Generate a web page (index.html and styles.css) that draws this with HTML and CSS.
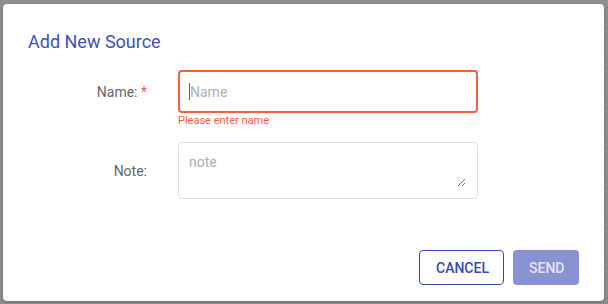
FILE: index.html
```html
<!DOCTYPE html>
<html>
<head>
<meta charset="utf-8">
<link rel="stylesheet" href="styles.css">
</head>
<body>
<div class="dialog">
  <h2 class="title">Add New Source</h2>
  <div class="form">
    <div class="row">
      <label class="label">Name: <span class="req">*</span></label>
      <div class="field">
        <div class="input error"><span class="caret"></span><span class="ph">Name</span></div>
        <div class="err-msg">Please enter name</div>
      </div>
    </div>
    <div class="row row-note">
      <label class="label">Note:</label>
      <div class="field">
        <div class="textarea"><span class="ph">note</span>
          <svg class="grip" width="9" height="9" viewBox="0 0 9 9"><path d="M8 1 L1 8 M8 5 L5 8" stroke="#777" stroke-width="1" fill="none"/></svg>
        </div>
      </div>
    </div>
  </div>
  <div class="actions">
    <button class="btn btn-outline">CANCEL</button>
    <button class="btn btn-fill">SEND</button>
  </div>
</div>
</body>
</html>
```
FILE: styles.css
```css
html, body { margin: 0; height: 100%; }
body {
  background-color: #8e8e8e;
  background-image: radial-gradient(circle, #7a7a7a 1px, transparent 1.2px);
  background-size: 10px 10px;
  background-position: 3px 3px;
  padding: 4px 4px 3px 3px;
  box-sizing: border-box;
  font-family: Roboto, "Liberation Sans", sans-serif;
}
.dialog {
  background: #fff;
  border-radius: 4px;
  height: 297px;
  box-sizing: border-box;
  padding: 26px 25px 16px 25px;
  display: flex;
  flex-direction: column;
  box-shadow: 0 1px 3px rgba(0,0,0,0.3);
}
.title {
  margin: 0;
  font-size: 18px;
  font-weight: 400;
  line-height: 24px;
  color: #3f51b5;
}
.form { margin-top: 16px; display: flex; flex-direction: column; }
.row { display: flex; align-items: flex-start; }
.label {
  width: 119px;
  text-align: right;
  font-size: 14px;
  color: #666;
  line-height: 20px;
  padding-top: 12px;
  flex-shrink: 0;
}
.req { color: #f4593b; }
.field { margin-left: 31px; width: 300px; }
.input {
  height: 43px;
  box-sizing: border-box;
  border: 2px solid #f4603e;
  border-radius: 4px;
  display: flex;
  align-items: center;
  padding-left: 9px;
  font-size: 14px;
}
.caret { width: 1px; height: 17px; background: #c0392b; }
.ph { color: #b0b0b0; font-size: 14px; }
.err-msg { color: #f4603e; font-size: 11px; line-height: 13px; margin-top: 1px; }
.row-note { margin-top: 15px; }
.row-note .label { padding-top: 19px; }
.textarea {
  height: 57px;
  box-sizing: border-box;
  border: 1px solid #e0e0e0;
  border-radius: 4px;
  padding: 10px 10px;
  position: relative;
  line-height: 17px;
}
.grip { position: absolute; right: 11px; bottom: 11px; }
.actions {
  margin-top: auto;
  display: flex;
  justify-content: flex-end;
  gap: 9px;
}
.btn {
  font-family: Roboto, "Liberation Sans", sans-serif;
  font-size: 14px;
  font-weight: 500;
  height: 35px;
  border-radius: 4px;
  padding: 0 16px;
  box-sizing: border-box;
}
.btn-outline { background: #fff; border: 1px solid #3949ab; color: #3949ab; width: 85px; }
.btn-fill { background: #8891d2; border: none; color: #e4e6f5; width: 66px; }
```
